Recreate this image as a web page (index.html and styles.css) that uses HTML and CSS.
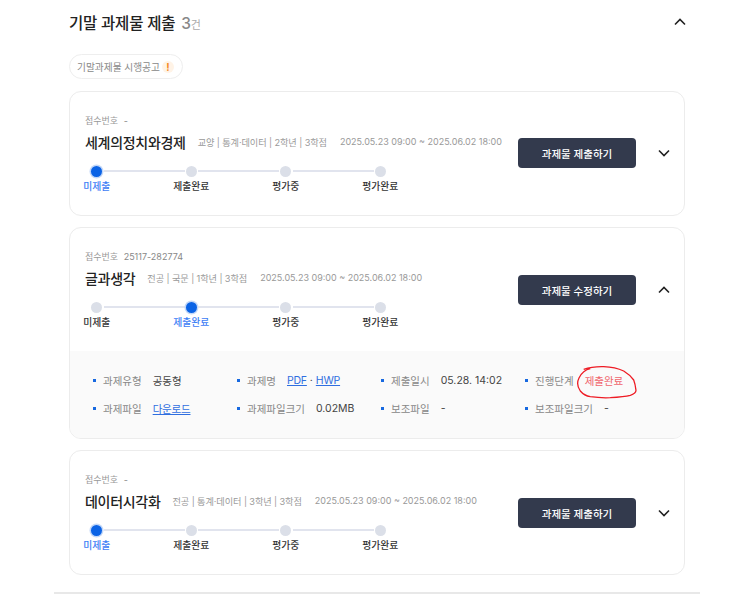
FILE: index.html
```html
<!DOCTYPE html>
<html lang="ko">
<head>
    <meta charset="UTF-8">
    <meta name="viewport" content="width=device-width, initial-scale=1.0">
    <title>기말 과제물 제출</title>
    <link rel="stylesheet" href="styles.css">
</head>
<body>
    <div class="container">
        <div class="section-head">
            <h2>기말 과제물 제출 <span class="count">3<small>건</small></span></h2>
            <svg class="chevron chevron-top" viewBox="0 0 12 8"><path d="M1 6.5 6 1.5l5 5"/></svg>
        </div>
        <a class="notice">기말과제물 시행공고 <span class="notice-icon">!</span></a>

        <div class="card">
            <div class="card-head">
                <div class="card-info">
                    <p class="receipt">접수번호 <span>-</span></p>
                    <div class="title-row">
                        <h3>세계의정치와경제</h3>
                        <span class="meta">교양 | 통계·데이터 | 2학년 | 3학점</span>
                        <span class="period">2025.05.23 09:00 ~ 2025.06.02 18:00</span>
                    </div>
                    <ol class="steps">
                        <li class="active"><i></i>미제출</li>
                        <li><i></i>제출완료</li>
                        <li><i></i>평가중</li>
                        <li><i></i>평가완료</li>
                    </ol>
                </div>
                <button class="submit-btn">과제물 제출하기</button>
                <svg class="chevron" viewBox="0 0 12 8"><path d="M1 1.5l5 5 5-5"/></svg>
            </div>
        </div>

        <div class="card">
            <div class="card-head">
                <div class="card-info">
                    <p class="receipt">접수번호 <span>25117-282774</span></p>
                    <div class="title-row">
                        <h3>글과생각</h3>
                        <span class="meta">전공 | 국문 | 1학년 | 3학점</span>
                        <span class="period">2025.05.23 09:00 ~ 2025.06.02 18:00</span>
                    </div>
                    <ol class="steps">
                        <li><i></i>미제출</li>
                        <li class="active"><i></i>제출완료</li>
                        <li><i></i>평가중</li>
                        <li><i></i>평가완료</li>
                    </ol>
                </div>
                <button class="submit-btn">과제물 수정하기</button>
                <svg class="chevron" viewBox="0 0 12 8"><path d="M1 6.5 6 1.5l5 5"/></svg>
            </div>
            <ul class="detail">
                <li><em>과제유형</em><span>공동형</span></li>
                <li><em>과제명</em><span><a href="#">PDF</a> · <a href="#">HWP</a></span></li>
                <li><em>제출일시</em><span>05.28. 14:02</span></li>
                <li>
                    <em>진행단계</em>
                    <span class="status">제출완료
                        <svg class="scribble" viewBox="0 0 62 34"><path d="M14.3 3.7C8 5 5 9 3 13c-2 4-1.500 9 1.300 13 3 3.500 6 5 10 5.700 7 1 13 1.300 20 1 7-.5 14-1 20-2.400 3-1 5.700-3 5.700-5-.5-4-1-7-2.300-10.300C54 10 51 8 47.700 6 41 3 34 2 27.700 1.700 20 1.500 13 2.500 7.700 4.300"/></svg>
                    </span>
                </li>
                <li><em>과제파일</em><span><a href="#">다운로드</a></span></li>
                <li><em>과제파일크기</em><span>0.02MB</span></li>
                <li><em>보조파일</em><span>-</span></li>
                <li><em>보조파일크기</em><span>-</span></li>
            </ul>
        </div>

        <div class="card">
            <div class="card-head">
                <div class="card-info">
                    <p class="receipt">접수번호 <span>-</span></p>
                    <div class="title-row">
                        <h3>데이터시각화</h3>
                        <span class="meta">전공 | 통계·데이터 | 3학년 | 3학점</span>
                        <span class="period">2025.05.23 09:00 ~ 2025.06.02 18:00</span>
                    </div>
                    <ol class="steps">
                        <li class="active"><i></i>미제출</li>
                        <li><i></i>제출완료</li>
                        <li><i></i>평가중</li>
                        <li><i></i>평가완료</li>
                    </ol>
                </div>
                <button class="submit-btn">과제물 제출하기</button>
                <svg class="chevron" viewBox="0 0 12 8"><path d="M1 1.5l5 5 5-5"/></svg>
            </div>
        </div>
    </div>
</body>
</html>
```
FILE: styles.css
```css
body {
    font-family: Inter, 'Noto Sans CJK KR', sans-serif;
    background-color: #fff;
    color: #222;
    margin: 0;
    overflow: hidden;
}
.container {
    width: 616px;
    margin-left: 54px;
    padding: 0 15px 17px;
    border-bottom: 2px solid #e8e8e8;
}
.section-head {
    display: flex;
    justify-content: space-between;
    align-items: center;
    height: 43px;
}
h2 {
    margin: 0;
    font-size: 15.5px;
    font-weight: 500;
    letter-spacing: -0.2px;
}
.count {
    margin-left: 2px;
    color: #888;
}
.count small {
    font-size: 11px;
    font-weight: 400;
    color: #aaa;
}
.chevron {
    width: 12px;
    height: 8px;
    flex: none;
    margin: 0 14px 0 22px;
    fill: none;
    stroke: #222;
    stroke-width: 1.6;
}
.chevron-top {
    margin: 0 -1px 0 0;
}
.notice {
    display: inline-flex;
    align-items: center;
    gap: 2px;
    height: 23px;
    margin-top: 11px;
    padding: 0 8px 0 7px;
    border: 1px solid #eee;
    border-radius: 13px;
    font-size: 9.7px;
    color: #888;
}
.notice-icon {
    width: 12px;
    height: 12px;
    border-radius: 50%;
    background-color: #fff3e6;
    color: #f58a1f;
    font-size: 10px;
    font-weight: 700;
    line-height: 12px;
    text-align: center;
}
.card {
    margin-top: 11px;
    border: 1px solid #ececec;
    border-radius: 12px;
    overflow: hidden;
}
.notice + .card {
    margin-top: 12px;
}
.card-head {
    display: flex;
    align-items: center;
    height: 122px;
    padding: 0 0 1px 15px;
}
.card + .card .submit-btn,
.card + .card .chevron {
    margin-top: 2px;
}
.card-info {
    flex: 1;
    min-width: 0;
}
.receipt {
    margin: 0;
    font-size: 9px;
    line-height: 14px;
    color: #999;
}
.receipt span {
    margin-left: 3px;
    color: #888;
}
.title-row {
    display: flex;
    align-items: center;
    height: 24px;
    margin-top: 2px;
    white-space: nowrap;
}
h3 {
    margin: 0 12px 0 0;
    font-size: 14px;
    font-weight: 500;
    letter-spacing: -0.3px;
}
.meta {
    margin-right: 13px;
    font-size: 9.2px;
    letter-spacing: -0.1px;
    color: #999;
}
.period {
    font-size: 9px;
    color: #999;
}
.steps {
    display: flex;
    margin: 12px 0 0 -35.5px;
    padding: 0;
    list-style: none;
}
.steps li {
    position: relative;
    display: flex;
    flex-direction: column;
    align-items: center;
    width: 94.5px;
    font-size: 9.8px;
    font-weight: 500;
    color: #333;
}
.steps i {
    width: 11px;
    height: 11px;
    margin-bottom: 2px;
    border-radius: 50%;
    background-color: #dbdfe8;
}
.steps li:not(:last-child)::after {
    content: '';
    position: absolute;
    top: 4px;
    left: calc(50% + 7px);
    width: 81px;
    height: 2px;
    background-color: #e1e4ee;
}
.steps .active {
    color: #3d80f5;
}
.steps .active i {
    background-color: #0b63e5;
    box-shadow: 0 0 0 1.5px #c4d8f8;
}
.submit-btn {
    flex: none;
    width: 118px;
    height: 30px;
    border: none;
    border-radius: 4px;
    background-color: #333a4d;
    color: #fff;
    font-family: inherit;
    font-size: 10.5px;
    font-weight: 500;
}
.detail {
    display: grid;
    grid-template-columns: repeat(4, 144px);
    row-gap: 10px;
    margin: 0;
    padding: 20px 0 21px 23px;
    background-color: #fafafa;
    list-style: none;
}
.detail li {
    display: flex;
    align-items: center;
    gap: 11px;
    height: 18px;
    font-size: 10.5px;
    color: #444;
}
.detail li::before {
    content: '';
    width: 3px;
    height: 3px;
    margin-right: -5px;
    background-color: #1769e0;
}
.detail em {
    font-style: normal;
    color: #888;
    margin-left: 1px;
}
.detail a {
    color: #2f6ee0;
    text-decoration: underline;
    letter-spacing: -0.2px;
}
.status {
    position: relative;
    color: #f0656d;
}
.scribble {
    position: absolute;
    top: -8px;
    left: -9px;
    width: 62px;
    height: 34px;
    fill: none;
    stroke: #ee1b24;
    stroke-width: 1.3;
}
```
